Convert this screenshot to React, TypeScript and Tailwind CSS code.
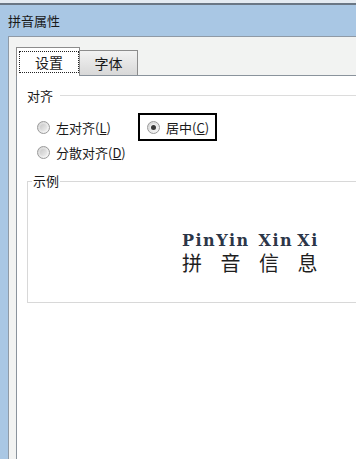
import React from "react";

const cjk = { fontFamily: '"Noto Sans CJK SC", "Noto Sans", sans-serif' };

function Radio({ checked }: { checked?: boolean }) {
  return (
    <div className="w-[13px] h-[13px] rounded-full border border-[#9a9a9a] bg-gradient-to-br from-[#d4d4d4] to-[#fafafa] flex items-center justify-center shrink-0">
      {checked ? (
        <div className="w-[7px] h-[7px] rounded-full bg-[#f0f0f0] flex items-center justify-center">
          <div className="w-[5px] h-[5px] rounded-full bg-[#3a3a3a]" />
        </div>
      ) : (
        <div className="w-[7px] h-[7px] rounded-full bg-gradient-to-br from-[#c8c8c8] to-[#eeeeee]" />
      )}
    </div>
  );
}

export default function App() {
  const chars = ["拼", "音", "信", "息"];
  return (
    <div className="w-[356px] h-[459px] overflow-hidden bg-[#a9c7e4] flex flex-col text-[#1a1a1a]" style={cjk}>
      {/* title bar */}
      <div className="h-[3px] bg-[#e4ebf2]" />
      <div className="h-[2px] bg-[#6a7785]" />
      <div className="h-[31px] flex items-center pl-[8px] text-[13px] leading-none">拼音属性</div>
      {/* body */}
      <div className="flex-1 flex min-h-0">
        <div className="w-[8px] bg-[#a9c7e4]" />
        <div className="flex-1 flex flex-col border-l border-t border-[#8f9aa6] bg-[#f2f3f2]">
          {/* tab strip */}
          <div className="h-[38px] flex items-end pl-[7px] relative z-10">
            <div className="w-[64px] h-[29px] -mb-px bg-white border border-b-0 border-[#8c8c8c] flex items-start justify-center pt-[3px] pl-[2px]">
              <div className="w-[60px] h-[22px] border border-dotted border-[#222] flex items-center justify-center text-[14px] leading-none">
                设置
              </div>
            </div>
            <div className="w-[58px] h-[25px] bg-gradient-to-b from-[#f2f2f2] to-[#d8d8d8] border border-l-0 border-b-0 border-[#8c8c8c] flex items-center justify-center text-[14px] leading-none">
              字体
            </div>
          </div>
          {/* panel */}
          <div className="flex-1 ml-[7px] bg-white border-l border-t border-[#8a939c] flex flex-col pl-[10px]">
            {/* 对齐 group */}
            <div className="flex items-center h-[14px] mt-[12px] text-[13px] leading-none">
              <span>对齐</span>
              <div className="flex-1 h-px bg-[#dcdcdc] ml-[7px]" />
            </div>
            <div className="flex items-center mt-[11px]">
              <div className="flex items-center gap-[6px] pl-[10px] w-[111px] text-[13px] leading-none">
                <Radio />
                <span>
                  左对齐(<span className="underline">L</span>)
                </span>
              </div>
              <div className="w-[79px] h-[28px] border-2 border-black flex items-center gap-[6px] pl-[7px] text-[13px] leading-none">
                <Radio checked />
                <span>
                  居中(<span className="underline">C</span>)
                </span>
              </div>
            </div>
            <div className="flex items-center gap-[6px] pl-[10px] mt-[2px] h-[18px] text-[13px] leading-none">
              <Radio />
              <span>
                分散对齐(<span className="underline">D</span>)
              </span>
            </div>
            {/* 示例 group */}
            <div className="relative mt-[20px] h-[122px] border-l border-t border-b border-[#d8d8d8] -mr-[4px]">
              <span className="absolute -top-[8px] left-[4px] bg-white px-[1px] text-[13px] leading-none">示例</span>
              <div className="flex flex-col pl-[154px] pt-[50px]">
                <div
                  className="h-[17px] text-[16px] leading-[17px] font-bold text-[#2c3648] flex tracking-[1.5px]"
                  style={{ fontFamily: '"DejaVu Serif", "Liberation Serif", serif' }}
                >
                  <span>PinYin</span>
                  <span className="ml-[9px]">Xin</span>
                  <span className="ml-[4px]">Xi</span>
                </div>
                <div className="flex h-[22px] mt-[3px] text-[20px] leading-[22px] text-[#1e1e1e] font-normal">
                  {chars.map((c) => (
                    <span key={c} className="w-[38.5px]">
                      {c}
                    </span>
                  ))}
                </div>
              </div>
            </div>
          </div>
        </div>
      </div>
    </div>
  );
}
